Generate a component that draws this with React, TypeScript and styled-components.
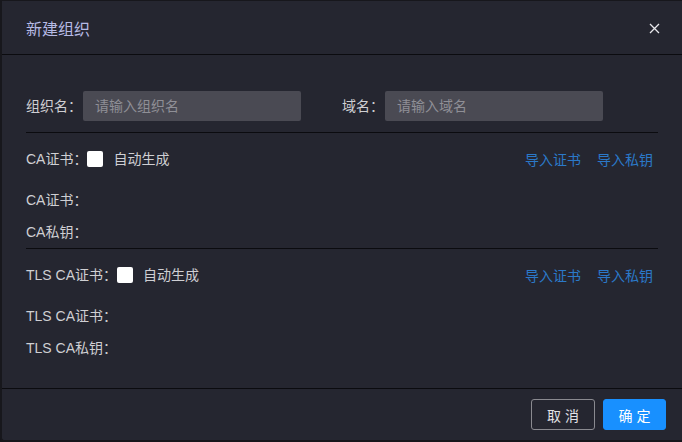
import React from "react";
import styled, { createGlobalStyle } from "styled-components";

const Global = createGlobalStyle`
  html, body { margin: 0; padding: 0; overflow: hidden; background: #16161b; }
  body { font-family: "Liberation Sans", "Noto Sans CJK SC", sans-serif; }
  * { box-sizing: border-box; }
`;

const Dialog = styled.div`
  width: 682px;
  height: 442px;
  display: flex;
  flex-direction: column;
  background: #252630;
  border-top: 1px solid #17171c;
  border-left: 2px solid #17171c;
  border-bottom: 2px solid #17171c;
  border-bottom-left-radius: 4px;
  color: #cfcfd3;
  font-size: 14px;
`;

const Header = styled.div`
  height: 54px;
  flex: none;
  display: flex;
  align-items: center;
  justify-content: space-between;
  padding: 0 22px 0 24px;
  border-bottom: 1px solid #0b0b0f;
`;

const Title = styled.div`
  font-size: 16px;
  color: #b6bae4;
  margin-top: 1px;
`;

const Close = styled.button`
  background: none;
  border: none;
  padding: 0;
  width: 12px;
  height: 12px;
  display: flex;
  align-items: center;
  justify-content: center;
  cursor: pointer;
  margin-top: 1px;
`;

const Body = styled.div`
  flex: 1;
  padding: 36px 24px 0 24px;
`;

const FormRow = styled.div`
  display: flex;
  align-items: center;
  height: 30px;
  margin-bottom: 11px;
`;

const Field = styled.div<{ $gap?: number }>`
  display: flex;
  align-items: center;
  margin-right: ${(p) => p.$gap ?? 0}px;
`;

const Label = styled.span`
  color: #cfcfd3;
  white-space: nowrap;
  line-height: 20px;
`;

const Input = styled.input`
  width: 218px;
  height: 30px;
  margin-left: 1px;
  border: none;
  border-radius: 2px;
  background: #4a4a53;
  color: #ddd;
  font: inherit;
  font-size: 14px;
  padding: 0 12px;
  outline: none;
  &::placeholder { color: #8f8f96; }
`;

const Section = styled.div`
  border-top: 1px solid #0b0b0f;
  padding-top: 10px;
`;

const Row = styled.div<{ $gapAfter?: number }>`
  display: flex;
  align-items: center;
  height: 32px;
  margin-bottom: ${(p) => p.$gapAfter ?? 0}px;
`;

const Check = styled.span`
  width: 16px;
  height: 16px;
  background: #fff;
  border-radius: 2px;
  margin-right: 10px;
  flex: none;
`;

const Spacer = styled.div`
  flex: 1;
`;

const Link = styled.a`
  color: #2b79c9;
  margin-left: 16px;
  cursor: pointer;
  &:last-child { margin-right: 5px; }
`;

const Footer = styled.div`
  height: 52px;
  flex: none;
  border-top: 1px solid #0b0b0f;
  display: flex;
  align-items: center;
  justify-content: flex-end;
  gap: 8px;
  padding: 0 16px 0 0;
`;

const Button = styled.button<{ $primary?: boolean }>`
  width: ${(p) => (p.$primary ? 63 : 64)}px;
  height: 31px;
  border-radius: 3px;
  font: inherit;
  font-size: 14px;
  letter-spacing: 4px;
  text-indent: 4px;
  cursor: pointer;
  color: ${(p) => (p.$primary ? "#fff" : "#e2e2e6")};
  background: ${(p) => (p.$primary ? "#1890ff" : "transparent")};
  border: 1px solid ${(p) => (p.$primary ? "#1890ff" : "#8a8a90")};
`;

const CertSection: React.FC<{ prefix: string }> = ({ prefix }) => (
  <Section>
    <Row $gapAfter={9}>
      <Label>{prefix}证书：</Label>
      <Check />
      <Label>自动生成</Label>
      <Spacer />
      <Link>导入证书</Link>
      <Link>导入私钥</Link>
    </Row>
    <Row>
      <Label>{prefix}证书：</Label>
    </Row>
    <Row>
      <Label>{prefix}私钥：</Label>
    </Row>
  </Section>
);

export default function App() {
  return (
    <>
      <Global />
      <Dialog>
        <Header>
          <Title>新建组织</Title>
          <Close aria-label="close">
            <svg width="11" height="11" viewBox="0 0 11 11">
              <path d="M1 1L10 10M10 1L1 10" stroke="#e8e8ec" strokeWidth="1.3" />
            </svg>
          </Close>
        </Header>
        <Body>
          <FormRow>
            <Field $gap={41}>
              <Label>组织名：</Label>
              <Input placeholder="请输入组织名" />
            </Field>
            <Field>
              <Label>域名：</Label>
              <Input placeholder="请输入域名" />
            </Field>
          </FormRow>
          <CertSection prefix="CA" />
          <CertSection prefix="TLS CA" />
        </Body>
        <Footer>
          <Button>取消</Button>
          <Button $primary>确定</Button>
        </Footer>
      </Dialog>
    </>
  );
}
